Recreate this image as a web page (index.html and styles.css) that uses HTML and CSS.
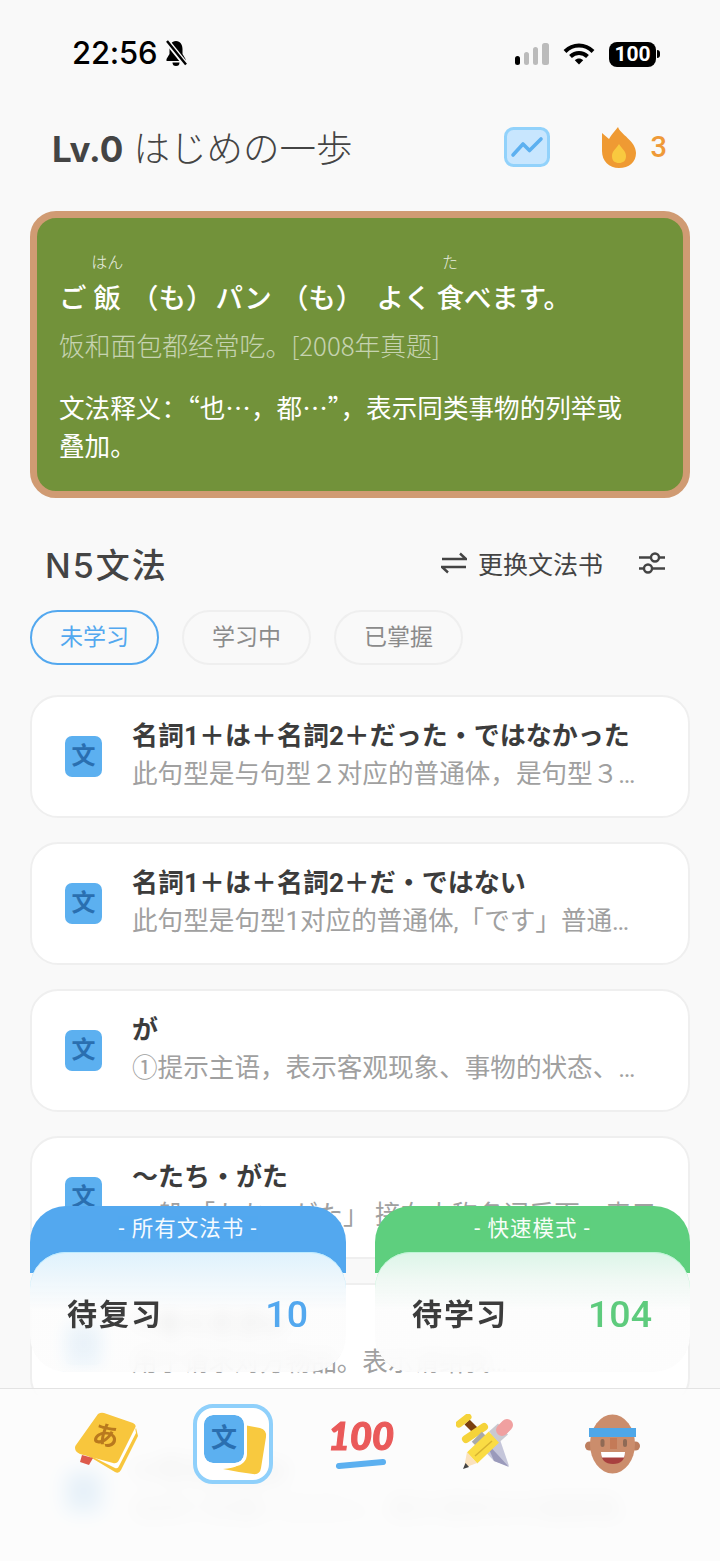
FILE: index.html
```html
<!DOCTYPE html>
<html lang="zh">
<head>
<meta charset="utf-8">
<title>N5文法</title>
<link rel="stylesheet" href="styles.css">
</head>
<body>
<div class="app">
  <div class="status">
    <div class="status-left">
      <span class="time">22:56</span>
      <svg class="bell" viewBox="0 0 24 26" width="24" height="26"><path d="M12 1C7.500 1 5.500 5 5.500 9V14L2.500 19V21H21.500V19L18.500 14V9C18.500 5 16.500 1 12 1Z" fill="#000"/><path d="M8.500 22.500A3.500 3.500 0 0 0 15.500 22.500Z" fill="#000"/><path d="M2 0L22 25" stroke="#f9f9f9" stroke-width="5.500"/><path d="M3 1L22 24.500" stroke="#000" stroke-width="2.400"/></svg>
    </div>
    <div class="status-right">
      <div class="signal"><i class="bar b1"></i><i class="bar b2"></i><i class="bar b3"></i><i class="bar b4"></i></div>
      <svg class="wifi" viewBox="0 0 32 22" width="32" height="22"><path d="M2 8.500C10 0.500 22 0.500 30 8.500M7.500 13.500C12.500 8.800 19.500 8.800 24.500 13.500" fill="none" stroke="#000" stroke-width="4"/><path d="M11.800 17.300C14.200 14.800 17.800 14.800 20.200 17.300L16 21.500Z" fill="#000"/></svg>
      <div class="battery"><span class="battery-body">100</span><i class="battery-nub"></i></div>
    </div>
  </div>

  <header class="topbar">
    <h1 class="level"><b>Lv.0</b> はじめの一歩</h1>
    <div class="top-actions">
      <svg class="chart" viewBox="0 0 46 40" width="46" height="40"><rect x="1.500" y="1.500" width="43" height="37" rx="8" fill="#c8e6fe" stroke="#92d2fb" stroke-width="3"/><path d="M9 28L19 17L25.500 23.500L37 12" fill="none" stroke="#5cb0f0" stroke-width="3.600" stroke-linecap="round" stroke-linejoin="round"/></svg>
      <div class="streak">
        <svg viewBox="0 0 34 41" width="34" height="41"><path d="M17 41C7 41 0 34 0 24L0 6L7 12C9 8 13 4 16 0C18 7 34 14 34 26C34 35 27 41 17 41Z" fill="#ef9a33"/><path d="M17 17C20 22 24 24 24 29C24 34 21 36 17 36C13 36 10 34 10 29C10 24 14 22 17 17Z" fill="#f9c93f"/></svg>
        <span class="streak-num">3</span>
      </div>
    </div>
  </header>

  <section class="sentence">
    <p class="jp"><span class="t1">ご</span><ruby class="t2">飯<rt>はん</rt></ruby><span class="t3">（も）</span><span class="t4">パン</span><span class="t5">（も）</span><span class="t6">よく</span><ruby>食<rt>た</rt></ruby><span>べます。</span></p>
    <p class="zh">饭和面包都经常吃。[2008年真题]</p>
    <p class="def">文法释义：“也…，都…”，表示同类事物的列举或叠加。</p>
  </section>

  <div class="section-head">
    <h2 class="section-title">N5文法</h2>
    <div class="section-tools">
      <svg viewBox="0 0 26 22" width="26" height="22"><path d="M1 7H25L19 1.500M25 15H1L7 20.500" fill="none" stroke="#444" stroke-width="2.400"/></svg>
      <span class="change">更换文法书</span>
      <svg class="sliders" viewBox="0 0 28 24" width="28" height="24"><path d="M1 6.500H13M21 6.500H27M1 17.500H6M14 17.500H27" fill="none" stroke="#444" stroke-width="2.400"/><circle cx="17" cy="6.500" r="4" fill="none" stroke="#444" stroke-width="2.400"/><circle cx="10" cy="17.500" r="4" fill="none" stroke="#444" stroke-width="2.400"/></svg>
    </div>
  </div>

  <div class="tabs">
    <span class="tab active">未学习</span>
    <span class="tab">学习中</span>
    <span class="tab">已掌握</span>
  </div>

  <div class="list">
    <article class="item"><span class="item-icon">文</span><div class="item-text"><h3>名詞1＋は＋名詞2＋だった・ではなかった</h3><p>此句型是与句型２对应的普通体，是句型３…</p></div></article>
    <article class="item"><span class="item-icon">文</span><div class="item-text"><h3>名詞1＋は＋名詞2＋だ・ではない</h3><p>此句型是句型1对应的普通体,「です」普通…</p></div></article>
    <article class="item"><span class="item-icon">文</span><div class="item-text"><h3>が</h3><p>①提示主语，表示客观现象、事物的状态、…</p></div></article>
    <article class="item"><span class="item-icon">文</span><div class="item-text"><h3>〜たち・がた</h3><p>一般 「たち・がた」 接在人称名词后面，表示…</p></div></article>
    <article class="item"><span class="item-icon">文</span><div class="item-text"><h3>〜をください</h3><p>用于请求对方物品。表示请给我…</p></div></article>
    <article class="item"><span class="item-icon">文</span><div class="item-text"><h3>〜てください</h3><p>动词て形接ください，表示请求对方做某事…</p></div></article>
  </div>

  <div class="floats">
    <div class="float blue">
      <div class="float-label">- 所有文法书 -</div>
      <div class="float-body"><span class="float-name">待复习</span><span class="float-num">10</span></div>
    </div>
    <div class="float green">
      <div class="float-label">- 快速模式 -</div>
      <div class="float-body"><span class="float-name">待学习</span><span class="float-num">104</span></div>
    </div>
  </div>

  <nav class="tabbar">
    <svg class="nav-icon nav-book" viewBox="0 0 64 64" width="64" height="64">
      <path d="M1 36L41 60Q45 62 47 58L64 24L62 16L40 50L2 33Z" fill="#f8c63d"/>
      <path d="M3 37L41 56Q44 57 45 54L62 21L61 15L40 48Z" fill="#fff"/>
      <path d="M24 2Q27 0 30 1L59 11Q63 13 61 16L45 48Q43 52 39 51L6 42Q-1 39 2 33Z" fill="#f8c63d"/>
      <path d="M8 43L19 46L15 53L6 50Z" fill="#dd5a4b"/>
      <text x="32" y="33" class="book-kana" transform="rotate(15 32 24)">あ</text>
    </svg>
    <div class="nav-active">
      <svg viewBox="0 0 72 72" width="72" height="72">
        <path d="M47 17L63 20Q70 22 69 29L64 60Q63 67 56 66Q40 64 26 61Q46 60 47 48Z" fill="#f8c93f"/>
      </svg>
      <span class="nav-card">文</span>
    </div>
    <svg class="nav-icon nav-hundred" viewBox="0 0 66 56" width="66" height="56">
      <text x="33" y="30" class="hundred">100</text>
      <path d="M11 46L55 42" stroke="#5cb0f0" stroke-width="6" stroke-linecap="round"/>
    </svg>
    <svg class="nav-icon nav-sword" viewBox="0 0 58 56" width="58" height="56">
      <path d="M26 25L41 17L53 52L38 47L22 30Z" fill="#c5c6da"/>
      <path d="M30 28L53 53L38 47Z" fill="#9a9abb"/>
      <path d="M11 8L21 18" stroke="#7a3f10" stroke-width="7"/>
      <path d="M3 10L12 3" stroke="#f5d33a" stroke-width="7" stroke-linecap="round"/>
      <path d="M10 25L28 13" stroke="#f5d33a" stroke-width="8" stroke-linecap="round"/>
      <path d="M19 31L29 21" stroke="#a9a9a9" stroke-width="9"/>
      <path d="M16 44L38 23" stroke="#fadc44" stroke-width="15"/>
      <path d="M19 42L36 27" stroke="#d7b331" stroke-width="1.500"/>
      <path d="M11 38L21 49L8 54Z" fill="#fbe2bd"/>
      <path d="M9.500 49L13 53L7 55Z" fill="#444"/>
      <path d="M38 23L47 15" stroke="#c9c9d0" stroke-width="15"/>
      <path d="M46 16L51 11" stroke="#f0a0a0" stroke-width="12" stroke-linecap="round"/>
    </svg>
    <svg class="nav-icon nav-face" viewBox="0 0 56 60" width="56" height="60">
      <circle cx="4.500" cy="32" r="4.500" fill="#bd7e5e"/><circle cx="50.500" cy="32" r="4.500" fill="#bd7e5e"/>
      <ellipse cx="27.500" cy="30" rx="22.500" ry="29.500" fill="#cb8d6c"/>
      <rect x="4" y="14" width="47" height="9" fill="#4fa7e8"/>
      <rect x="15.500" y="25" width="4" height="8" rx="2" fill="#8f6a55"/><rect x="38" y="25" width="4" height="8" rx="2" fill="#8f6a55"/>
      <rect x="25" y="24" width="7" height="11" fill="#c47a57"/>
      <path d="M16 38H40Q40 50 28 50Q16 50 16 38Z" fill="#a8403f"/>
      <path d="M16 38H40Q40 41 39 43.500H17Q16 41 16 38Z" fill="#fff"/>
    </svg>
  </nav>
</div>
</body>
</html>
```
FILE: styles.css
```css
* { box-sizing: border-box; }
html, body { margin: 0; padding: 0; }
body {
  background: #f9f9f9;
  font-family: Roboto, "Noto Sans CJK SC", sans-serif;
  color: #444;
}
h1, h2, h3, p { margin: 0; font-weight: inherit; font-size: inherit; }

.app { position: relative; width: 720px; height: 1561px; overflow: hidden; background: #f9f9f9; }

/* status bar */
.status { height: 104px; padding: 36px 60px 0 72px; display: flex; justify-content: space-between; align-items: flex-start; }
.status-left { display: flex; align-items: center; gap: 7px; height: 34px; }
.time { font: 500 31px/34px Inter, Roboto, sans-serif; color: #000; letter-spacing: -0.2px; }
.bell { display: block; }
.status-right { display: flex; align-items: center; height: 36px; }
.signal { display: flex; align-items: flex-end; gap: 4px; height: 22px; width: 35px; }
.bar { display: block; width: 5px; border-radius: 2.500px; background: #bbb; }
.b1 { height: 9px; background: #000; }
.b2 { height: 13px; }
.b3 { height: 18px; }
.b4 { height: 22px; width: 7px; }
.wifi { margin-left: 13px; }
.battery { margin-left: 14px; display: flex; align-items: center; }
.battery-body { width: 47px; height: 25px; background: #000; border-radius: 8px; color: #fff; font: 700 21px/25px Roboto, sans-serif; text-align: center; }
.battery-nub { width: 3px; height: 8px; background: #000; border-radius: 0 3px 3px 0; margin-left: 1px; }

/* header */
.topbar { height: 84px; padding: 0 53px 0 52px; display: flex; align-items: center; justify-content: space-between; }
.level { font-family: Inter, "Noto Sans CJK JP", sans-serif; font-size: 36.500px; font-weight: 300; color: #444; white-space: nowrap; }
.level b { font-weight: 700; font-size: 35px; }
.top-actions { display: flex; align-items: center; gap: 52px; padding-top: 2px; }
.chart { display: block; }
.streak { display: flex; align-items: center; gap: 15px; }
.streak-num { font-size: 29px; font-weight: 500; color: #ef9a38; }

/* sentence */
.sentence {
  margin: 23px 30px 0;
  height: 287px;
  border: 7px solid #d09b73;
  border-radius: 26px;
  background: #72923a;
  padding: 48px 45px 0 22px;
  color: #fff;
  font-family: "Noto Sans CJK SC", sans-serif;
}
.jp { font-size: 27.500px; font-weight: 500; height: 48px; line-height: 48px; white-space: nowrap; }
.t1 { margin-right: 7px; }
.t2 { margin-right: 10px; }
.t3 { margin-right: 2px; }
.t4 { margin-right: 9px; }
.t5 { margin-right: 13px; }
.t6 { margin-right: 5px; }
.jp rt { position: relative; top: -13px; font-size: 16px; font-weight: 300; line-height: 20px; opacity: .85; }
.zh { font-size: 25.800px; font-weight: 300; line-height: 38px; margin-top: 12px; opacity: .6; }
.def { font-size: 25.600px; font-weight: 400; line-height: 38px; margin-top: 24px; }

/* section head */
.section-head { margin: 40px 54px 0 45px; height: 50px; display: flex; align-items: center; justify-content: space-between; }
.section-title { font-family: Inter, "Noto Sans CJK SC", sans-serif; font-size: 34px; font-weight: 500; letter-spacing: 2px; color: #444; }
.section-tools { display: flex; align-items: center; gap: 11px; }
.change { font-size: 25px; font-weight: 400; color: #444; }
.sliders { margin-left: 24px; }

/* tabs */
.tabs { display: flex; gap: 23px; margin: 22px 30px 0; }
.tab { width: 129px; height: 55px; border: 2px solid #efefef; border-radius: 28px; font-size: 23px; line-height: 52px; text-align: center; color: #8b8b8b; }
.tab.active { border-color: #53a8ef; color: #53a8ef; }

/* list */
.list { margin: 30px 30px 0; display: flex; flex-direction: column; gap: 24px; }
.item { height: 123px; flex: none; display: flex; align-items: center; background: #fff; border: 2px solid #efefef; border-radius: 28px; padding: 0 30px 0 33px; }
.item-icon { flex: none; width: 37px; height: 41px; border-radius: 7px; background: #5cb0f0; color: #2a6fb0; font-size: 24px; font-weight: 700; line-height: 41px; text-align: center; }
.item-text { margin-left: 30px; min-width: 0; flex: 1; padding-bottom: 5px; }
.item-text h3 { font-size: 26px; font-weight: 700; color: #3c3c3c; line-height: 40px; white-space: nowrap; }
.item-text p { font-size: 25.600px; font-weight: 400; color: #a0a0a0; line-height: 36px; white-space: nowrap; overflow: hidden; }

/* floating cards */
.floats { position: absolute; left: 30px; right: 30px; top: 1206px; display: flex; justify-content: space-between; }
.float { width: 315px; height: 166px; border-radius: 36px; overflow: hidden; position: relative; isolation: isolate; }
.float.blue { width: 316px; }
.float-label { height: 46px; color: #fff; font-size: 21.500px; line-height: 46px; text-align: center; letter-spacing: 1px; opacity: .95; }
.float::before { content: ""; position: absolute; left: 0; right: 0; top: 0; height: 67px; z-index: -1; }
.blue::before { background: #53a8ef; }
.green::before { background: #5ecf7e; }
.float-body {
  height: 120px;
  border-radius: 36px 36px 0 0;
  padding: 0 38px 0 37px;
  display: flex;
  align-items: center;
  justify-content: space-between;
  backdrop-filter: blur(8px);
}
.blue .float-body { background: linear-gradient(#dff2fd 0, #eef7fc 28px, rgba(252,252,252,.9) 58px, rgba(252,252,252,.9) 100%); box-shadow: inset 0 1px #bdebff; }
.green .float-body { background: linear-gradient(#dcf5e8 0, #f0f9f4 28px, rgba(252,252,252,.93) 58px, rgba(252,252,252,.93) 100%); box-shadow: inset 0 1px #bdf5d5; }
.float-name { font-size: 30px; font-weight: 700; letter-spacing: 2px; color: #3c3c3c; }
.float-num { font-size: 37.500px; font-weight: 500; padding-top: 4px; }
.blue .float-num { color: #53a8ef; }
.green .float-num { color: #5ecb7d; }

/* bottom bar */
.tabbar {
  position: absolute; left: 0; right: 0; bottom: 0; height: 173px;
  border-top: 1px solid #e3e3e3;
  background: rgba(252,252,252,.88);
  backdrop-filter: blur(10px);
  display: flex;
  align-items: flex-start;
  padding: 15px 0 0 74px;
}
.nav-icon { display: block; flex: none; }
.nav-book { margin-top: 8px; }
.nav-hundred { margin: 16px 0 0 55px; }
.nav-sword { margin: 10px 0 0 62px; }
.nav-face { margin: 10px 0 0 71px; }
.nav-active { position: relative; flex: none; width: 80px; height: 80px; margin-left: 55px; border: 4px solid #8fd0fb; border-radius: 20px; background: #fff; }
.nav-active svg { position: absolute; left: 0; top: 0; display: block; }
.nav-card { position: absolute; left: 7px; top: 7px; width: 40px; height: 48px; background: #5cb0f0; border-radius: 9px; outline: 3px solid #fff; color: #2a6fb0; font-size: 26px; font-weight: 700; line-height: 46px; text-align: center; }
.book-kana { font-size: 26px; font-weight: 700; fill: #b9791e; text-anchor: middle; font-family: "Noto Sans CJK JP", sans-serif; }
.hundred { font-family: Lato, Roboto, sans-serif; font-size: 38px; font-weight: 900; font-style: italic; fill: #ea5a5a; stroke: #ea5a5a; stroke-width: 1.200px; text-anchor: middle; }
```
